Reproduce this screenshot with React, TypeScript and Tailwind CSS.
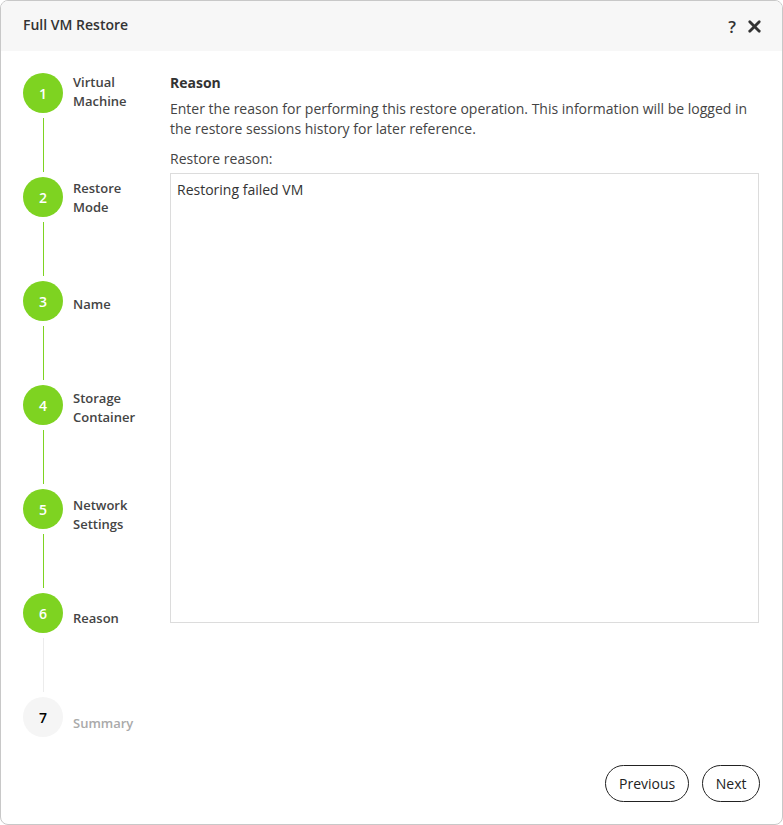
import { X } from 'lucide-react';

const steps = [
  { n: 1, label: ['Virtual', 'Machine'], done: true, mt: 'mt-0' },
  { n: 2, label: ['Restore', 'Mode'], done: true, mt: 'mt-[2px]' },
  { n: 3, label: ['Name'], done: true, mt: 'mt-[14px]' },
  { n: 4, label: ['Storage', 'Container'], done: true, mt: 'mt-[4px]' },
  { n: 5, label: ['Network', 'Settings'], done: true, mt: 'mt-[7px]' },
  { n: 6, label: ['Reason'], done: true, mt: 'mt-[16px]' },
  { n: 7, label: ['Summary'], done: false, mt: 'mt-[17px]' },
];

export default function App() {
  return (
    <div className="w-[783px] h-[825px] bg-white" style={{ fontFamily: '"Open Sans", sans-serif' }}>
      <div className="h-full flex flex-col border border-[#c8c8c8] rounded-lg overflow-hidden">
        <div className="h-[50px] shrink-0 bg-[#f7f7f7] flex items-center justify-between pl-[22px] pr-[18px]">
          <span className="text-[14px] font-semibold text-[#333] mb-[3px]">Full VM Restore</span>
          <div className="flex items-center gap-[9px] text-[#333]">
            <span className="text-[17px] font-semibold leading-none">?</span>
            <X size={19} strokeWidth={3.5} />
          </div>
        </div>

        <div className="flex-1 flex">
          {/* wizard steps */}
          <div className="w-[148px] shrink-0 pl-[22px] pt-[22px]">
            {steps.map((s, i) => (
              <div key={s.n} className="flex">
                <div className="flex flex-col items-center w-[40px]">
                  <div
                    className={`w-[40px] h-[40px] rounded-full flex items-center justify-center text-[14px] font-semibold ${
                      s.done ? 'bg-[#7ed321] text-white' : 'bg-[#f5f5f5] text-black'
                    }`}
                  >
                    {s.n}
                  </div>
                  {i < steps.length - 1 && (
                    <div className="py-[5px]">
                      <div className={`w-px h-[54px] ${s.n === 6 ? 'bg-[#ececec]' : 'bg-[#7ed321]'}`} />
                    </div>
                  )}
                </div>
                <div
                  className={`ml-[10px] text-[13px] font-semibold leading-[19px] ${s.mt} ${
                    s.done ? 'text-[#444]' : 'text-[#aaa]'
                  }`}
                >
                  {s.label.map((l) => (
                    <div key={l}>{l}</div>
                  ))}
                </div>
              </div>
            ))}
          </div>

          {/* content */}
          <div className="flex-1 flex flex-col pt-[22px] pr-[23px] pl-[21px] pb-[22px]">
            <div className="text-[14px] font-bold text-[#333] leading-[20px]">Reason</div>
            <p className="mt-[6px] text-[14px] text-[#444] leading-[20px]">
              Enter the reason for performing this restore operation. This information will be logged in the restore
              sessions history for later reference.
            </p>
            <div className="mt-[10px] text-[14px] text-[#444] leading-[20px]">Restore reason:</div>
            <div className="mt-[4px] h-[450px] border border-[#dcdcdc] px-[6px] py-[6px] text-[14px] text-[#333] leading-[20px]">
              Restoring failed VM
            </div>
            <div className="mt-auto -mr-px flex justify-end gap-[13px]">
              <button className="h-[37px] px-[13px] rounded-full border border-[#222] text-[14px] text-[#222]">
                Previous
              </button>
              <button className="h-[37px] px-[12.5px] rounded-full border border-[#222] text-[14px] text-[#222]">
                Next
              </button>
            </div>
          </div>
        </div>
      </div>
    </div>
  );
}
